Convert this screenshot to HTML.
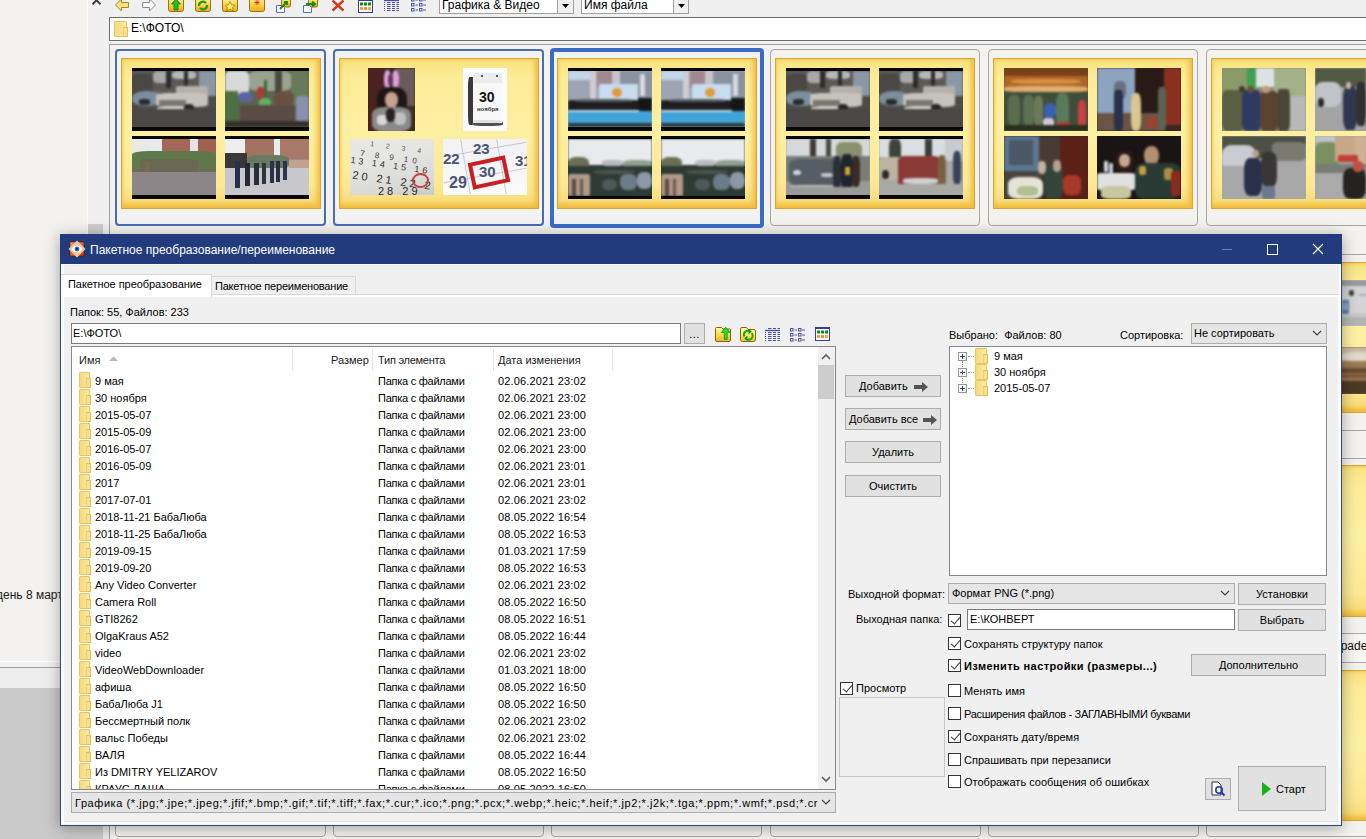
<!DOCTYPE html>
<html><head><meta charset="utf-8">
<style>
*{box-sizing:border-box;margin:0;padding:0}
html,body{width:1366px;height:839px;overflow:hidden}
body{position:relative;background:#f0f0f0;font-family:"Liberation Sans",sans-serif;font-size:11px;color:#000}
.a{position:absolute}
.t{position:absolute;white-space:nowrap;line-height:13px}
.card{position:absolute;border:1px solid #a6a6a6;border-radius:4px;background:#f3f2ee}
.card.sel1{border:2px solid #4a6cb4;border-radius:4px;background:#f1f2f2}
.card.sel2{border:4px solid #3a6cc6;border-radius:4px;background:#f1f2f2}
.frame{position:absolute;border:1px solid #d9a737;background:linear-gradient(180deg,#fae27e 0,#fcec98 12%,#fdf0a2 50%,#fce894 85%,#f8d870 100%);box-shadow:inset -5px -6px 5px -2px #f1bb3a,inset 3px 3px 3px -2px #f3c850}
.ph{position:absolute;overflow:hidden}
.lb:before,.lb:after{content:"";position:absolute;left:0;right:0;height:3px;background:#080808}
.lb:before{top:0}.lb:after{bottom:0}
.btn{position:absolute;background:#e1e1e1;border:1px solid #adadad;text-align:center;line-height:21px}
.cb{position:absolute;width:13px;height:13px;border:1px solid #333;background:#fff}
.cb.on:after{content:"";position:absolute;left:3.5px;top:0px;width:4px;height:8px;border:solid #333;border-width:0 1.6px 1.6px 0;transform:rotate(40deg)}
.fi{position:absolute;width:12px;height:16px;background:linear-gradient(90deg,#f8da7c,#fde89e);border:1px solid #e6c46c;border-radius:1px}.fi:after{content:"";position:absolute;right:-2px;bottom:-1px;width:3px;height:8px;background:#fbe08c;border:1px solid #e2be62;border-left-color:#f0d070}
</style></head><body>
<div class="a" style="left:0;top:0;width:88px;height:662px;background:#f3f2ee"></div><div class="t" style="left:-4px;top:589px;font-size:12px;color:#1a1a1a">день 8 март</div><div class="a" style="left:0;top:661px;width:88px;height:1px;background:#ffffff"></div><div class="a" style="left:0;top:667px;width:88px;height:1px;background:#a0a0a0"></div><div class="a" style="left:0;top:668px;width:88px;height:20px;background:#eeeeee"></div><div class="a" style="left:0;top:688px;width:109px;height:151px;background:#c9c9c9"></div><div class="a" style="left:103px;top:688px;width:6px;height:151px;background:#e6e6e6"></div><div class="a" style="left:87px;top:0;width:1px;height:688px;background:#fbfbfb"></div><div class="a" style="left:88px;top:0;width:21px;height:688px;background:#f0f0f0"></div><div class="a" style="left:88px;top:224px;width:15px;height:14px;background:#cdcdcd"></div><svg class="a" style="left:88px;top:0" width="16" height="6"><path d="M4.5 4.2L8.5 0.3L12.5 4.2" stroke="#3a3a3a" stroke-width="1.9" fill="none"/></svg><svg class="a" style="left:0;top:0" width="700" height="17" viewBox="0 0 700 17">
<defs>
<linearGradient id="gy" x1="0" y1="0" x2="0" y2="1"><stop offset="0" stop-color="#fff7b0"/><stop offset="0.5" stop-color="#fcd550"/><stop offset="1" stop-color="#f0a818"/></linearGradient>
</defs>
<path d="M115.5 5L121.5 -1V2.5H128.5V7.5H121.5V11Z" fill="#fbe27a" stroke="#a88a20" stroke-width="1"/>
<path d="M155.5 5L149.5 -1V2.5H142.5V7.5H149.5V11Z" fill="#fafafa" stroke="#8a8a8a" stroke-width="1"/>
<rect x="168.5" y="-3" width="15" height="14.5" rx="2" fill="url(#gy)" stroke="#a07010"/>
<path d="M174 10V4H171.5L176 -1L180.5 4H178V10Z" fill="#20c020" stroke="#107010" stroke-width="0.8"/>
<rect x="195.5" y="-3" width="15" height="14.5" rx="2" fill="url(#gy)" stroke="#a07010"/>
<path d="M199 6a4 4 0 0 1 7-3M207 5a4 4 0 0 1-7 3" stroke="#18a018" stroke-width="2.2" fill="none"/>
<rect x="222.5" y="-3" width="15" height="14.5" rx="2" fill="url(#gy)" stroke="#a07010"/>
<path d="M230 1.5L231.6 4.8L235 5.2L232.5 7.5L233.2 10.8L230 9.2L226.8 10.8L227.5 7.5L225 5.2L228.4 4.8Z" fill="#fff060" stroke="#a08010" stroke-width="0.8"/>
<rect x="249.5" y="-3" width="15" height="14.5" rx="2" fill="url(#gy)" stroke="#a07010"/>
<path d="M257 0V5M254.5 2.5H259.5M255 0.5L259 4.5M259 0.5L255 4.5" stroke="#e83020" stroke-width="0.9"/>
<rect x="281.5" y="-3" width="9" height="10" rx="1.5" fill="url(#gy)" stroke="#a07010"/>
<path d="M276.5 5.5H282.5L284.5 7.5V12.5H276.5Z" fill="#fff" stroke="#5a6ad0" stroke-width="1"/>
<path d="M280 9L287 2M284 2H287V5" stroke="#109010" stroke-width="1.8" fill="none"/>
<rect x="308.5" y="-3" width="9" height="10" rx="1.5" fill="url(#gy)" stroke="#a07010"/>
<path d="M303.5 5.5H309.5L311.5 7.5V12.5H303.5Z" fill="#fff" stroke="#5a6ad0" stroke-width="1"/>
<path d="M306 4H314M312 1.5L315 4L312 6.5" stroke="#109010" stroke-width="1.8" fill="none"/>
<path d="M332.5 0.5L343.5 10.5M343.5 0.5L332.5 10.5" stroke="#d83818" stroke-width="2.4"/>
<g transform="translate(-457,-328)">
<rect x="815.5" y="327.5" width="14" height="13" fill="#fff" stroke="#3c3c90" stroke-width="1"/>
<rect x="815" y="327" width="15" height="2" fill="#3c3c90"/>
<rect x="817" y="330.5" width="3" height="3" fill="#108a10"/><rect x="821" y="330.5" width="3" height="3" fill="#108a10"/><rect x="825" y="330.5" width="3" height="3" fill="#108a10"/>
<rect x="817" y="335" width="3" height="3" fill="#f0a050"/><rect x="821" y="335" width="3" height="3" fill="#f09040"/><rect x="825" y="335" width="3" height="3" fill="#e8a858"/>
</g>
<g transform="translate(-381,-330)" stroke="#4a4aa8" stroke-width="1.1">
<path d="M768 328.5H771.5M773 328.5H776M777.5 328.5H780"/>
<path d="M765 330.5H780" stroke-width="1.3"/>
<path d="M765 332.5H766M768 332.5H771.5M773 332.5H776M777.5 332.5H780"/>
<path d="M765 334.5H766M768 334.5H771.5M773 334.5H776M777.5 334.5H780"/>
<path d="M765 336.5H766M768 336.5H771.5M773 336.5H776M777.5 336.5H780"/>
<path d="M765 338.5H766M768 338.5H771.5M773 338.5H776M777.5 338.5H780"/>
<path d="M765 340.5H766M768 340.5H771.5M773 340.5H776M777.5 340.5H780"/>
</g>
<g transform="translate(-379,-330)" fill="none" stroke="#5050a8" stroke-width="1">
<rect x="790.5" y="328.5" width="2.5" height="2.5"/><rect x="798.5" y="328.5" width="2.5" height="2.5"/>
<rect x="790.5" y="333.5" width="2.5" height="2.5"/><rect x="798.5" y="333.5" width="2.5" height="2.5"/>
<rect x="790.5" y="338.5" width="2.5" height="2.5"/><rect x="798.5" y="338.5" width="2.5" height="2.5"/>
<path d="M794.5 330H797M802 330H805M794.5 335H797M802 335H805M794.5 340H797M802 340H805" stroke-width="1.2"/>
</g>
</svg><div class="a" style="left:439px;top:-2px;width:135px;height:16px;background:#fff;border:1px solid #a0a0a0"></div><div class="t" style="left:442px;top:-2px;font-size:12px;line-height:14px">Графика &amp; Видео</div><div class="a" style="left:557px;top:-2px;width:17px;height:16px;background:#f0f0f0;border:1px solid #a0a0a0"></div><svg class="a" style="left:561px;top:4px" width="9" height="5"><path d="M1 0H8L4.5 4Z" fill="#000"/></svg><div class="a" style="left:581px;top:-2px;width:108px;height:16px;background:#fff;border:1px solid #a0a0a0"></div><div class="t" style="left:584px;top:-2px;font-size:12px;line-height:14px">Имя файла</div><div class="a" style="left:673px;top:-2px;width:16px;height:16px;background:#f0f0f0;border:1px solid #a0a0a0"></div><svg class="a" style="left:677px;top:4px" width="9" height="5"><path d="M1 0H8L4.5 4Z" fill="#000"/></svg><div class="a" style="left:109px;top:17px;width:1257px;height:24px;background:#fff;border:1px solid #6e6e6e;border-right:0"></div><div class="fi" style="left:114px;top:21px;width:13px;height:16px"></div><div class="t" style="left:131px;top:22px;font-size:12px">E:\ФОТО\</div><div class="a" style="left:109px;top:44px;width:1257px;height:795px;background:#f3f2ee;border-top:1px solid #a0a0a0;border-left:1px solid #a0a0a0"></div><div class="card sel1" style="left:115px;top:49px;width:211px;height:177px"></div><div class="card sel1" style="left:333px;top:49px;width:211px;height:177px"></div><div class="card sel2" style="left:550px;top:48px;width:214px;height:180px"></div><div class="card " style="left:770px;top:49px;width:210px;height:177px"></div><div class="card " style="left:988px;top:49px;width:210px;height:177px"></div><div class="card " style="left:1206px;top:49px;width:220px;height:177px"></div><div class="frame" style="left:121px;top:58px;width:200px;height:151px"></div><div class="frame" style="left:339px;top:58px;width:200px;height:151px"></div><div class="frame" style="left:557px;top:58px;width:200px;height:151px"></div><div class="frame" style="left:775px;top:58px;width:200px;height:151px"></div><div class="frame" style="left:993px;top:58px;width:200px;height:151px"></div><div class="frame" style="left:1211px;top:58px;width:200px;height:151px"></div><div class="ph" style="left:132px;top:68px;width:84px;height:63px;background:#080808"><div class="a" style="left:0;top:3px;width:84px;height:56px;overflow:hidden;background:#4e4c48"><div class="a" style="left:-2px;top:-2px;width:88px;height:60px;filter:blur(1.0px)"><div class="a" style="left:2.0px;top:2.0px;width:84.0px;height:22.4px;background:#5c5a56;border-radius:0%"></div><div class="a" style="left:23.0px;top:2.0px;width:16.8px;height:12.3px;background:#a8a8aa;border-radius:30%"></div><div class="a" style="left:42.3px;top:2.0px;width:23.5px;height:8.4px;background:#b8b8ba;border-radius:30%"></div><div class="a" style="left:69.2px;top:2.0px;width:16.8px;height:25.2px;background:#8a98a6;border-radius:0%"></div><div class="a" style="left:35.6px;top:2.0px;width:5.0px;height:16.8px;background:#2e2c2a;border-radius:0%"></div><div class="a" style="left:54.1px;top:2.0px;width:4.2px;height:15.7px;background:#302e2c;border-radius:0%"></div><div class="a" style="left:2.0px;top:4.8px;width:21.0px;height:22.4px;background:#4a4844;border-radius:20%"></div><div class="a" style="left:2.0px;top:22.2px;width:30.2px;height:14.6px;background:#7a8e9c;border-radius:45%"></div><div class="a" style="left:8.7px;top:30.0px;width:11.8px;height:5.6px;background:#2a2a2a;border-radius:40%"></div><div class="a" style="left:45.7px;top:16.6px;width:31.9px;height:12.3px;background:#b4b0aa;border-radius:10%"></div><div class="a" style="left:25.5px;top:24.4px;width:52.1px;height:13.4px;background:#c6c2bc;border-radius:20%"></div><div class="a" style="left:28.9px;top:31.1px;width:26.9px;height:5.6px;background:#7a7670;border-radius:0%"></div><div class="a" style="left:27.2px;top:37.8px;width:31.9px;height:3.4px;background:#d8d4d0;border-radius:30%"></div><div class="a" style="left:54.1px;top:34.5px;width:10.1px;height:7.8px;background:#262624;border-radius:50%"></div><div class="a" style="left:2.0px;top:40.1px;width:84.0px;height:17.9px;background:#4a4846;border-radius:0%"></div></div></div></div><div class="ph" style="left:225px;top:68px;width:84px;height:63px;background:#080808"><div class="a" style="left:0;top:3px;width:84px;height:56px;overflow:hidden;background:#5e6450"><div class="a" style="left:-2px;top:-2px;width:88px;height:60px;filter:blur(1.0px)"><div class="a" style="left:2.0px;top:2.0px;width:23.5px;height:23.5px;background:#d8dada;border-radius:20%"></div><div class="a" style="left:25.5px;top:2.0px;width:42.0px;height:19.6px;background:#9aa290;border-radius:20%"></div><div class="a" style="left:67.5px;top:2.0px;width:18.5px;height:33.6px;background:#6a7a58;border-radius:0%"></div><div class="a" style="left:52.4px;top:2.0px;width:6.7px;height:28.0px;background:#4a4a40;border-radius:0%"></div><div class="a" style="left:2.0px;top:21.6px;width:13.4px;height:33.6px;background:#4e6e44;border-radius:0%"></div><div class="a" style="left:15.4px;top:23.3px;width:15.1px;height:10.1px;background:#5a64a0;border-radius:40%"></div><div class="a" style="left:33.9px;top:17.7px;width:6.7px;height:12.3px;background:#b03838;border-radius:30%"></div><div class="a" style="left:40.6px;top:11.0px;width:3.4px;height:15.7px;background:#3a6a3a;border-radius:0%"></div><div class="a" style="left:35.6px;top:28.9px;width:12.6px;height:10.1px;background:#62b062;border-radius:40%"></div><div class="a" style="left:50.7px;top:22.2px;width:20.2px;height:15.7px;background:#6a5040;border-radius:40%"></div><div class="a" style="left:72.6px;top:27.2px;width:13.4px;height:26.9px;background:#8a90b0;border-radius:20%"></div><div class="a" style="left:17.1px;top:35.6px;width:55.4px;height:18.5px;background:#5a4c44;border-radius:0%"></div><div class="a" style="left:2.0px;top:52.4px;width:84.0px;height:5.6px;background:#34302c;border-radius:0%"></div></div></div></div><div class="ph" style="left:132px;top:136px;width:84px;height:63px;background:#080808"><div class="a" style="left:0;top:3px;width:84px;height:56px;overflow:hidden;background:linear-gradient(180deg,#d8d8d8 0,#7a8a68 40%,#6a6a58 55%,#8c8688 75%,#8a8484 100%)"><div class="a" style="left:-2px;top:-2px;width:88px;height:60px;filter:blur(0.7px)"><div class="a" style="left:2.0px;top:2.0px;width:30.2px;height:15.7px;background:#e8eaea;border-radius:0%"></div><div class="a" style="left:32.2px;top:2.0px;width:27.7px;height:21.3px;background:#a4675a;border-radius:0%"></div><div class="a" style="left:60.0px;top:2.0px;width:8.4px;height:16.8px;background:#e4e6e6;border-radius:0%"></div><div class="a" style="left:68.4px;top:2.0px;width:17.6px;height:22.4px;background:#a06050;border-radius:0%"></div><div class="a" style="left:2.0px;top:14.3px;width:84.0px;height:17.9px;background:#5e7a4c;border-radius:20%"></div><div class="a" style="left:10.4px;top:21.6px;width:58.8px;height:14.0px;background:#6a6852;border-radius:20%"></div><div class="a" style="left:14.6px;top:24.4px;width:5.0px;height:28.0px;background:#7a6a50;border-radius:0%"></div><div class="a" style="left:2.0px;top:34.5px;width:84.0px;height:23.5px;background:#8c8688;border-radius:0%"></div></div></div></div><div class="ph" style="left:225px;top:136px;width:84px;height:63px;background:#080808"><div class="a" style="left:0;top:3px;width:84px;height:56px;overflow:hidden;background:linear-gradient(180deg,#dde0e2 0,#8a7a70 30%,#c4c4c6 55%,#cacacc 100%)"><div class="a" style="left:-2px;top:-2px;width:88px;height:60px;filter:blur(0.7px)"><div class="a" style="left:2.0px;top:2.0px;width:20.2px;height:16.8px;background:#eceef0;border-radius:0%"></div><div class="a" style="left:22.2px;top:2.0px;width:28.6px;height:19.6px;background:#a27262;border-radius:0%"></div><div class="a" style="left:50.7px;top:2.0px;width:6.7px;height:16.8px;background:#eaecee;border-radius:0%"></div><div class="a" style="left:57.4px;top:2.0px;width:28.6px;height:19.6px;background:#a87868;border-radius:0%"></div><div class="a" style="left:2.0px;top:16.0px;width:21.8px;height:19.6px;background:#383838;border-radius:0%"></div><div class="a" style="left:23.8px;top:17.7px;width:42.0px;height:14.0px;background:#6a7a60;border-radius:30%"></div><div class="a" style="left:65.8px;top:23.3px;width:20.2px;height:8.4px;background:#c0a290;border-radius:0%"></div><div class="a" style="left:2.0px;top:31.1px;width:84.0px;height:26.9px;background:#c8c8cc;border-radius:0%"></div><div class="a" style="left:12.1px;top:24.4px;width:5.0px;height:26.9px;background:#2a3048;border-radius:0%"></div><div class="a" style="left:22.2px;top:25.5px;width:5.0px;height:23.5px;background:#262a36;border-radius:0%"></div><div class="a" style="left:30.6px;top:25.5px;width:5.0px;height:22.4px;background:#2a2e3a;border-radius:0%"></div><div class="a" style="left:39.0px;top:25.5px;width:4.2px;height:21.3px;background:#2e3440;border-radius:0%"></div><div class="a" style="left:46.5px;top:24.4px;width:4.2px;height:21.3px;background:#2a3248;border-radius:0%"></div><div class="a" style="left:53.2px;top:24.4px;width:4.2px;height:20.2px;background:#2a2e40;border-radius:0%"></div><div class="a" style="left:60.0px;top:24.4px;width:4.2px;height:19.0px;background:#30344a;border-radius:0%"></div></div></div></div><div class="ph" style="left:368px;top:68px;width:47px;height:63px;background:#080808"><div class="a" style="left:0;top:0px;width:47px;height:63px;overflow:hidden;background:#3a2a28"><div class="a" style="left:-2px;top:-2px;width:51px;height:67px;filter:blur(1.0px)"><div class="a" style="left:2.0px;top:2.0px;width:16.4px;height:63.0px;background:#4a2220;border-radius:0%"></div><div class="a" style="left:30.2px;top:2.0px;width:18.8px;height:37.8px;background:#6a5a58;border-radius:0%"></div><div class="a" style="left:18.0px;top:3.9px;width:6.6px;height:18.9px;background:#e6a8e6;border-radius:50%"></div><div class="a" style="left:26.4px;top:3.9px;width:6.6px;height:18.9px;background:#e0a0e0;border-radius:50%"></div><div class="a" style="left:21.7px;top:8.3px;width:5.6px;height:11.3px;background:#5a3a50;border-radius:40%"></div><div class="a" style="left:10.5px;top:20.9px;width:30.1px;height:28.4px;background:#1e1616;border-radius:40%"></div><div class="a" style="left:18.9px;top:25.9px;width:13.2px;height:16.4px;background:#c8a090;border-radius:45%"></div><div class="a" style="left:5.8px;top:41.1px;width:39.5px;height:25.2px;background:#8a8a8a;border-radius:30%"></div><div class="a" style="left:11.4px;top:49.2px;width:9.4px;height:9.4px;background:#d8d8d8;border-radius:40%"></div><div class="a" style="left:27.9px;top:46.1px;width:11.8px;height:12.6px;background:#c0c0c0;border-radius:40%"></div><div class="a" style="left:19.9px;top:42.3px;width:9.4px;height:13.9px;background:#2a2020;border-radius:40%"></div></div></div></div><div class="ph" style="left:463px;top:68px;width:44px;height:63px;background:#080808"><div class="a" style="left:0;top:0px;width:44px;height:63px;overflow:hidden;background:#fbfbfb"><div class="a" style="left:-2px;top:-2px;width:48px;height:67px;filter:blur(0.6px)"><div class="a" style="left:7.3px;top:10.8px;width:7.9px;height:47.9px;background:#3a3a3a;border-radius:20%"></div><div class="a" style="left:10.8px;top:54.9px;width:30.8px;height:5.0px;background:#505050;border-radius:30%"></div><div class="a" style="left:11.7px;top:7.0px;width:29.0px;height:50.4px;background:#f8f8f8;border-radius:0%"></div><div class="a" style="left:12.6px;top:7.0px;width:28.2px;height:10.1px;background:#ececec;border-radius:0%"></div><div class="a" style="left:11.7px;top:53.7px;width:29.0px;height:3.8px;background:#e0e0e0;border-radius:30%"></div></div><div class="a" style="left:18px;top:7px;width:2px;height:2px;background:#222;border-radius:50%"></div><div class="a" style="left:33px;top:7px;width:2px;height:2px;background:#222;border-radius:50%"></div><div class="t" style="left:16px;top:22px;font-size:14px;line-height:14px;font-weight:bold;color:#111">30</div><div class="t" style="left:14px;top:38px;font-size:6px;line-height:7px;font-weight:bold;color:#333">ноября</div></div></div><div class="ph" style="left:350px;top:139px;width:84px;height:56px;background:#080808"><div class="a" style="left:0;top:0px;width:84px;height:56px;overflow:hidden;background:linear-gradient(165deg,#e8e8e6 0,#e4e4e2 40%,#d8d8d4 80%,#cacac6 100%)"><div class="a" style="left:-2px;top:-2px;width:88px;height:60px;filter:blur(0.3px)"></div><div class="t" style="left:20px;top:2px;font-size:7px;color:#555;letter-spacing:5px;transform:rotate(8deg)">1 2 3 4</div><div class="t" style="left:10px;top:12px;font-size:8px;color:#444;letter-spacing:4px;transform:rotate(8deg)">7 8 9 10</div><div class="t" style="left:0px;top:22px;font-size:9px;color:#333;letter-spacing:3px;transform:rotate(8deg)">13 14 15 16 17</div><div class="t" style="left:2px;top:36px;font-size:11px;color:#2a2a2a;letter-spacing:3px;transform:rotate(8deg)">20 21 22 23</div><div class="t" style="left:28px;top:46px;font-size:11px;color:#2a2a2a;letter-spacing:3px">28 29</div><div class="a" style="left:62px;top:34px;width:17px;height:15px;border:2px solid #c84040;border-radius:50%"></div></div></div><div class="ph" style="left:443px;top:139px;width:84px;height:56px;background:#080808"><div class="a" style="left:0;top:0px;width:84px;height:56px;overflow:hidden;background:linear-gradient(180deg,#f2f2f6 0,#fafafa 100%)"><div class="a" style="left:-2px;top:-2px;width:88px;height:60px;filter:blur(0.3px)"></div><div class="a" style="left:0;top:10px;width:84px;height:1px;background:#c8c8d0;transform:rotate(-10deg)"></div><div class="a" style="left:0;top:36px;width:84px;height:1px;background:#c8c8d0;transform:rotate(-10deg)"></div><div class="a" style="left:22px;top:0;width:1px;height:56px;background:#c8c8d0;transform:rotate(-10deg)"></div><div class="a" style="left:58px;top:0;width:1px;height:56px;background:#c8c8d0;transform:rotate(-10deg)"></div><div class="t" style="left:0px;top:12px;font-size:15px;line-height:15px;font-weight:bold;color:#4a5474">22</div><div class="t" style="left:30px;top:2px;font-size:15px;line-height:15px;font-weight:bold;color:#4a5474">23</div><div class="t" style="left:72px;top:14px;font-size:15px;line-height:15px;font-weight:bold;color:#4a5474">31</div><div class="t" style="left:6px;top:36px;font-size:16px;line-height:16px;font-weight:bold;color:#4a5474">29</div><div class="a" style="left:27px;top:20px;width:38px;height:27px;border:4px solid #c81e24;transform:rotate(-12deg)"></div><div class="t" style="left:36px;top:25px;font-size:15px;line-height:15px;font-weight:bold;color:#4a5474">30</div></div></div><div class="ph" style="left:568px;top:68px;width:84px;height:63px;background:#080808"><div class="a" style="left:0;top:3px;width:84px;height:56px;overflow:hidden;background:#a0a8b8"><div class="a" style="left:-2px;top:-2px;width:88px;height:60px;filter:blur(1.0px)"><div class="a" style="left:2.0px;top:2.0px;width:26.9px;height:11.2px;background:#c4d6ea;border-radius:0%"></div><div class="a" style="left:2.0px;top:11.0px;width:25.2px;height:23.5px;background:#9ea4b2;border-radius:5%"></div><div class="a" style="left:23.8px;top:2.0px;width:6.7px;height:31.4px;background:#d0ccd4;border-radius:0%"></div><div class="a" style="left:30.6px;top:2.0px;width:15.1px;height:16.8px;background:#a08890;border-radius:0%"></div><div class="a" style="left:45.7px;top:2.0px;width:8.4px;height:16.8px;background:#c8c4cc;border-radius:0%"></div><div class="a" style="left:54.1px;top:2.0px;width:31.9px;height:28.0px;background:#8a92a0;border-radius:0%"></div><div class="a" style="left:74.2px;top:4.8px;width:5.0px;height:22.4px;background:#d8d8e0;border-radius:0%"></div><div class="a" style="left:33.1px;top:15.4px;width:38.6px;height:16.8px;background:#c8dcf0;border-radius:4%"></div><div class="a" style="left:45.7px;top:18.8px;width:10.1px;height:9.0px;background:#e09a40;border-radius:50%"></div><div class="a" style="left:2.0px;top:31.1px;width:70.6px;height:11.2px;background:#1e1e20;border-radius:10%"></div><div class="a" style="left:8.7px;top:30.0px;width:58.8px;height:3.4px;background:#5a5a60;border-radius:30%"></div><div class="a" style="left:71.7px;top:28.9px;width:14.3px;height:16.8px;background:#161616;border-radius:0%"></div><div class="a" style="left:2.0px;top:42.3px;width:84.0px;height:12.3px;background:#40a4d8;border-radius:0%"></div><div class="a" style="left:2.0px;top:41.2px;width:70.6px;height:2.2px;background:#b8d8e8;border-radius:0%"></div><div class="a" style="left:2.0px;top:54.1px;width:84.0px;height:3.9px;background:#2a3a40;border-radius:0%"></div></div></div></div><div class="ph" style="left:661px;top:68px;width:84px;height:63px;background:#080808"><div class="a" style="left:0;top:3px;width:84px;height:56px;overflow:hidden;background:#a0a8b8"><div class="a" style="left:-2px;top:-2px;width:88px;height:60px;filter:blur(1.0px)"><div class="a" style="left:2.0px;top:2.0px;width:26.9px;height:11.2px;background:#c4d6ea;border-radius:0%"></div><div class="a" style="left:2.0px;top:11.0px;width:25.2px;height:23.5px;background:#9ea4b2;border-radius:5%"></div><div class="a" style="left:23.8px;top:2.0px;width:6.7px;height:31.4px;background:#d0ccd4;border-radius:0%"></div><div class="a" style="left:30.6px;top:2.0px;width:15.1px;height:16.8px;background:#a08890;border-radius:0%"></div><div class="a" style="left:45.7px;top:2.0px;width:8.4px;height:16.8px;background:#c8c4cc;border-radius:0%"></div><div class="a" style="left:54.1px;top:2.0px;width:31.9px;height:28.0px;background:#8a92a0;border-radius:0%"></div><div class="a" style="left:74.2px;top:4.8px;width:5.0px;height:22.4px;background:#d8d8e0;border-radius:0%"></div><div class="a" style="left:33.1px;top:15.4px;width:38.6px;height:16.8px;background:#c8dcf0;border-radius:4%"></div><div class="a" style="left:45.7px;top:18.8px;width:10.1px;height:9.0px;background:#e09a40;border-radius:50%"></div><div class="a" style="left:2.0px;top:31.1px;width:70.6px;height:11.2px;background:#1e1e20;border-radius:10%"></div><div class="a" style="left:8.7px;top:30.0px;width:58.8px;height:3.4px;background:#5a5a60;border-radius:30%"></div><div class="a" style="left:71.7px;top:28.9px;width:14.3px;height:16.8px;background:#161616;border-radius:0%"></div><div class="a" style="left:2.0px;top:42.3px;width:84.0px;height:12.3px;background:#40a4d8;border-radius:0%"></div><div class="a" style="left:2.0px;top:41.2px;width:70.6px;height:2.2px;background:#b8d8e8;border-radius:0%"></div><div class="a" style="left:2.0px;top:54.1px;width:84.0px;height:3.9px;background:#2a3a40;border-radius:0%"></div></div></div></div><div class="ph" style="left:568px;top:136px;width:84px;height:63px;background:#080808"><div class="a" style="left:0;top:3px;width:84px;height:57px;overflow:hidden;background:#2e3a34"><div class="a" style="left:-2px;top:-2px;width:88px;height:61px;filter:blur(1.0px)"><div class="a" style="left:2.0px;top:2.0px;width:84.0px;height:26.2px;background:#e8eaee;border-radius:0%"></div><div class="a" style="left:2.0px;top:20.2px;width:21.0px;height:12.5px;background:#6a7058;border-radius:40%"></div><div class="a" style="left:35.6px;top:22.5px;width:21.0px;height:6.8px;background:#b8bcc0;border-radius:30%"></div><div class="a" style="left:56.6px;top:22.5px;width:29.4px;height:8.0px;background:#90a090;border-radius:30%"></div><div class="a" style="left:2.0px;top:29.4px;width:84.0px;height:29.6px;background:#2e3a34;border-radius:0%"></div><div class="a" style="left:2.0px;top:37.3px;width:21.8px;height:21.7px;background:#b0988a;border-radius:10%"></div><div class="a" style="left:6.2px;top:41.9px;width:3.4px;height:17.1px;background:#5a4a40;border-radius:0%"></div><div class="a" style="left:13.8px;top:41.9px;width:3.4px;height:17.1px;background:#6a5a50;border-radius:0%"></div><div class="a" style="left:35.6px;top:41.9px;width:15.1px;height:11.4px;background:#4a5a58;border-radius:40%"></div><div class="a" style="left:54.1px;top:37.3px;width:16.8px;height:16.0px;background:#6a7c88;border-radius:40%"></div><div class="a" style="left:70.9px;top:35.1px;width:15.1px;height:17.1px;background:#8a98a8;border-radius:40%"></div><div class="a" style="left:27.2px;top:32.8px;width:42.0px;height:4.6px;background:#4a5450;border-radius:40%"></div></div></div></div><div class="ph" style="left:661px;top:136px;width:84px;height:63px;background:#080808"><div class="a" style="left:0;top:3px;width:84px;height:57px;overflow:hidden;background:#2e3a34"><div class="a" style="left:-2px;top:-2px;width:88px;height:61px;filter:blur(1.0px)"><div class="a" style="left:2.0px;top:2.0px;width:84.0px;height:26.2px;background:#e8eaee;border-radius:0%"></div><div class="a" style="left:2.0px;top:20.2px;width:21.0px;height:12.5px;background:#6a7058;border-radius:40%"></div><div class="a" style="left:35.6px;top:22.5px;width:21.0px;height:6.8px;background:#b8bcc0;border-radius:30%"></div><div class="a" style="left:56.6px;top:22.5px;width:29.4px;height:8.0px;background:#90a090;border-radius:30%"></div><div class="a" style="left:2.0px;top:29.4px;width:84.0px;height:29.6px;background:#2e3a34;border-radius:0%"></div><div class="a" style="left:2.0px;top:37.3px;width:21.8px;height:21.7px;background:#b0988a;border-radius:10%"></div><div class="a" style="left:6.2px;top:41.9px;width:3.4px;height:17.1px;background:#5a4a40;border-radius:0%"></div><div class="a" style="left:13.8px;top:41.9px;width:3.4px;height:17.1px;background:#6a5a50;border-radius:0%"></div><div class="a" style="left:35.6px;top:41.9px;width:15.1px;height:11.4px;background:#4a5a58;border-radius:40%"></div><div class="a" style="left:54.1px;top:37.3px;width:16.8px;height:16.0px;background:#6a7c88;border-radius:40%"></div><div class="a" style="left:70.9px;top:35.1px;width:15.1px;height:17.1px;background:#8a98a8;border-radius:40%"></div><div class="a" style="left:27.2px;top:32.8px;width:42.0px;height:4.6px;background:#4a5450;border-radius:40%"></div></div></div></div><div class="ph" style="left:786px;top:68px;width:84px;height:63px;background:#080808"><div class="a" style="left:0;top:3px;width:84px;height:56px;overflow:hidden;background:#4e4c48"><div class="a" style="left:-2px;top:-2px;width:88px;height:60px;filter:blur(1.0px)"><div class="a" style="left:2.0px;top:2.0px;width:84.0px;height:22.4px;background:#5c5a56;border-radius:0%"></div><div class="a" style="left:23.0px;top:2.0px;width:16.8px;height:12.3px;background:#a8a8aa;border-radius:30%"></div><div class="a" style="left:42.3px;top:2.0px;width:23.5px;height:8.4px;background:#b8b8ba;border-radius:30%"></div><div class="a" style="left:69.2px;top:2.0px;width:16.8px;height:25.2px;background:#8a98a6;border-radius:0%"></div><div class="a" style="left:35.6px;top:2.0px;width:5.0px;height:16.8px;background:#2e2c2a;border-radius:0%"></div><div class="a" style="left:54.1px;top:2.0px;width:4.2px;height:15.7px;background:#302e2c;border-radius:0%"></div><div class="a" style="left:2.0px;top:4.8px;width:21.0px;height:22.4px;background:#4a4844;border-radius:20%"></div><div class="a" style="left:2.0px;top:22.2px;width:30.2px;height:14.6px;background:#7a8e9c;border-radius:45%"></div><div class="a" style="left:8.7px;top:30.0px;width:11.8px;height:5.6px;background:#2a2a2a;border-radius:40%"></div><div class="a" style="left:45.7px;top:16.6px;width:31.9px;height:12.3px;background:#b4b0aa;border-radius:10%"></div><div class="a" style="left:25.5px;top:24.4px;width:52.1px;height:13.4px;background:#c6c2bc;border-radius:20%"></div><div class="a" style="left:28.9px;top:31.1px;width:26.9px;height:5.6px;background:#7a7670;border-radius:0%"></div><div class="a" style="left:27.2px;top:37.8px;width:31.9px;height:3.4px;background:#d8d4d0;border-radius:30%"></div><div class="a" style="left:54.1px;top:34.5px;width:10.1px;height:7.8px;background:#262624;border-radius:50%"></div><div class="a" style="left:2.0px;top:40.1px;width:84.0px;height:17.9px;background:#4a4846;border-radius:0%"></div></div></div></div><div class="ph" style="left:879px;top:68px;width:84px;height:63px;background:#080808"><div class="a" style="left:0;top:3px;width:84px;height:56px;overflow:hidden;background:#4e4c48"><div class="a" style="left:-2px;top:-2px;width:88px;height:60px;filter:blur(1.0px)"><div class="a" style="left:2.0px;top:2.0px;width:84.0px;height:22.4px;background:#5c5a56;border-radius:0%"></div><div class="a" style="left:23.0px;top:2.0px;width:16.8px;height:12.3px;background:#a8a8aa;border-radius:30%"></div><div class="a" style="left:42.3px;top:2.0px;width:23.5px;height:8.4px;background:#b8b8ba;border-radius:30%"></div><div class="a" style="left:69.2px;top:2.0px;width:16.8px;height:25.2px;background:#8a98a6;border-radius:0%"></div><div class="a" style="left:35.6px;top:2.0px;width:5.0px;height:16.8px;background:#2e2c2a;border-radius:0%"></div><div class="a" style="left:54.1px;top:2.0px;width:4.2px;height:15.7px;background:#302e2c;border-radius:0%"></div><div class="a" style="left:2.0px;top:4.8px;width:21.0px;height:22.4px;background:#4a4844;border-radius:20%"></div><div class="a" style="left:2.0px;top:22.2px;width:30.2px;height:14.6px;background:#7a8e9c;border-radius:45%"></div><div class="a" style="left:8.7px;top:30.0px;width:11.8px;height:5.6px;background:#2a2a2a;border-radius:40%"></div><div class="a" style="left:45.7px;top:16.6px;width:31.9px;height:12.3px;background:#b4b0aa;border-radius:10%"></div><div class="a" style="left:25.5px;top:24.4px;width:52.1px;height:13.4px;background:#c6c2bc;border-radius:20%"></div><div class="a" style="left:28.9px;top:31.1px;width:26.9px;height:5.6px;background:#7a7670;border-radius:0%"></div><div class="a" style="left:27.2px;top:37.8px;width:31.9px;height:3.4px;background:#d8d4d0;border-radius:30%"></div><div class="a" style="left:54.1px;top:34.5px;width:10.1px;height:7.8px;background:#262624;border-radius:50%"></div><div class="a" style="left:2.0px;top:40.1px;width:84.0px;height:17.9px;background:#4a4846;border-radius:0%"></div></div></div></div><div class="ph" style="left:786px;top:136px;width:84px;height:63px;background:#080808"><div class="a" style="left:0;top:3px;width:84px;height:56px;overflow:hidden;background:#9a9a98"><div class="a" style="left:-2px;top:-2px;width:88px;height:60px;filter:blur(1.0px)"><div class="a" style="left:2.0px;top:2.0px;width:84.0px;height:16.8px;background:#d6d9da;border-radius:0%"></div><div class="a" style="left:25.5px;top:2.0px;width:6.7px;height:22.4px;background:#3e3a34;border-radius:0%"></div><div class="a" style="left:42.3px;top:2.0px;width:5.0px;height:19.6px;background:#4a4a40;border-radius:0%"></div><div class="a" style="left:52.4px;top:4.8px;width:25.2px;height:16.8px;background:#8a9070;border-radius:30%"></div><div class="a" style="left:2.0px;top:18.8px;width:84.0px;height:25.2px;background:#7a7c78;border-radius:0%"></div><div class="a" style="left:4.5px;top:22.2px;width:50.4px;height:26.9px;background:#545e64;border-radius:20%"></div><div class="a" style="left:8.7px;top:32.8px;width:8.4px;height:5.6px;background:#d8d8d8;border-radius:50%"></div><div class="a" style="left:37.3px;top:35.6px;width:11.8px;height:4.5px;background:#c8c8c8;border-radius:40%"></div><div class="a" style="left:6.2px;top:47.9px;width:46.2px;height:3.4px;background:#c0c0c0;border-radius:30%"></div><div class="a" style="left:49.0px;top:18.8px;width:8.4px;height:34.7px;background:#2a2e38;border-radius:30%"></div><div class="a" style="left:57.4px;top:16.6px;width:11.8px;height:37.0px;background:#1e2430;border-radius:30%"></div><div class="a" style="left:67.5px;top:18.8px;width:8.4px;height:30.8px;background:#3a2a28;border-radius:30%"></div><div class="a" style="left:60.8px;top:30.0px;width:5.0px;height:7.8px;background:#d0a830;border-radius:0%"></div><div class="a" style="left:2.0px;top:50.2px;width:84.0px;height:7.8px;background:#9a9a98;border-radius:0%"></div></div></div></div><div class="ph" style="left:879px;top:136px;width:84px;height:63px;background:#080808"><div class="a" style="left:0;top:3px;width:84px;height:56px;overflow:hidden;background:#a8a8a6"><div class="a" style="left:-2px;top:-2px;width:88px;height:60px;filter:blur(1.0px)"><div class="a" style="left:2.0px;top:2.0px;width:84.0px;height:17.9px;background:#dadee2;border-radius:0%"></div><div class="a" style="left:12.1px;top:2.0px;width:11.8px;height:25.2px;background:#404438;border-radius:30%"></div><div class="a" style="left:48.2px;top:2.0px;width:6.7px;height:22.4px;background:#3a3e36;border-radius:0%"></div><div class="a" style="left:67.5px;top:2.0px;width:18.5px;height:22.4px;background:#c8ccd0;border-radius:0%"></div><div class="a" style="left:2.0px;top:19.9px;width:30.2px;height:23.5px;background:#bcb4a0;border-radius:20%"></div><div class="a" style="left:5.4px;top:32.8px;width:6.7px;height:9.0px;background:#2a2a2a;border-radius:50%"></div><div class="a" style="left:20.5px;top:18.8px;width:42.0px;height:30.8px;background:#8a3a36;border-radius:15%"></div><div class="a" style="left:25.5px;top:41.2px;width:35.3px;height:5.6px;background:#d0d0d0;border-radius:30%"></div><div class="a" style="left:60.8px;top:17.7px;width:8.4px;height:33.6px;background:#7a6040;border-radius:30%"></div><div class="a" style="left:75.9px;top:14.3px;width:8.4px;height:33.6px;background:#3a4258;border-radius:30%"></div><div class="a" style="left:2.0px;top:46.8px;width:84.0px;height:11.2px;background:#a8a8a6;border-radius:0%"></div></div></div></div><div class="ph" style="left:1004px;top:68px;width:84px;height:63px;background:#080808"><div class="a" style="left:0;top:0px;width:84px;height:63px;overflow:hidden;background:#4a5a42"><div class="a" style="left:-2px;top:-2px;width:88px;height:67px;filter:blur(1.2px)"><div class="a" style="left:2.0px;top:2.0px;width:84.0px;height:23.9px;background:#b06428;border-radius:0%"></div><div class="a" style="left:2.0px;top:2.0px;width:84.0px;height:7.6px;background:#7a4018;border-radius:0%"></div><div class="a" style="left:8.7px;top:13.3px;width:70.6px;height:5.0px;background:#d89040;border-radius:40%"></div><div class="a" style="left:2.0px;top:19.6px;width:84.0px;height:6.3px;background:#e0b070;border-radius:30%"></div><div class="a" style="left:2.0px;top:25.9px;width:84.0px;height:39.1px;background:#3e4e3a;border-radius:0%"></div><div class="a" style="left:6.2px;top:28.5px;width:11.8px;height:31.5px;background:#5a6e4e;border-radius:30%"></div><div class="a" style="left:20.5px;top:28.5px;width:11.8px;height:31.5px;background:#5a7050;border-radius:30%"></div><div class="a" style="left:32.2px;top:30.4px;width:8.4px;height:28.4px;background:#6a7a58;border-radius:30%"></div><div class="a" style="left:54.1px;top:27.2px;width:13.4px;height:37.8px;background:#5a7a58;border-radius:30%"></div><div class="a" style="left:42.3px;top:36.6px;width:11.8px;height:15.8px;background:#3a60b0;border-radius:40%"></div><div class="a" style="left:40.6px;top:52.4px;width:11.8px;height:12.6px;background:#d0c8d8;border-radius:30%"></div><div class="a" style="left:54.1px;top:55.5px;width:15.1px;height:9.4px;background:#c03030;border-radius:40%"></div><div class="a" style="left:75.9px;top:33.5px;width:8.4px;height:31.5px;background:#c84040;border-radius:30%"></div><div class="a" style="left:2.0px;top:58.7px;width:84.0px;height:6.3px;background:#2a3020;border-radius:0%"></div></div></div></div><div class="ph" style="left:1097px;top:68px;width:84px;height:63px;background:#080808"><div class="a" style="left:0;top:0px;width:84px;height:63px;overflow:hidden;background:#3a2620"><div class="a" style="left:-2px;top:-2px;width:88px;height:67px;filter:blur(1.2px)"><div class="a" style="left:2.0px;top:2.0px;width:37.8px;height:45.4px;background:#8ca4c0;border-radius:0%"></div><div class="a" style="left:18.8px;top:14.6px;width:12.6px;height:18.9px;background:#6a7080;border-radius:30%"></div><div class="a" style="left:39.8px;top:2.0px;width:29.4px;height:47.2px;background:#2a1a16;border-radius:0%"></div><div class="a" style="left:69.2px;top:2.0px;width:16.8px;height:56.7px;background:#8a3020;border-radius:0%"></div><div class="a" style="left:2.0px;top:47.4px;width:67.2px;height:17.6px;background:#6a5446;border-radius:0%"></div><div class="a" style="left:18.8px;top:24.1px;width:9.2px;height:41.0px;background:#28304a;border-radius:20%"></div><div class="a" style="left:35.6px;top:27.2px;width:10.9px;height:37.8px;background:#d8c890;border-radius:30%"></div><div class="a" style="left:62.5px;top:20.9px;width:8.4px;height:44.1px;background:#5a6454;border-radius:20%"></div><div class="a" style="left:52.4px;top:51.1px;width:10.1px;height:11.3px;background:#a04030;border-radius:30%"></div></div></div></div><div class="ph" style="left:1004px;top:136px;width:84px;height:63px;background:#080808"><div class="a" style="left:0;top:0px;width:84px;height:63px;overflow:hidden;background:#3a2a26"><div class="a" style="left:-2px;top:-2px;width:88px;height:67px;filter:blur(1.2px)"><div class="a" style="left:2.0px;top:2.0px;width:35.3px;height:34.6px;background:#5a7890;border-radius:0%"></div><div class="a" style="left:7.0px;top:5.8px;width:23.5px;height:25.2px;background:#4a5868;border-radius:0%"></div><div class="a" style="left:37.3px;top:2.0px;width:21.0px;height:41.0px;background:#4a3a34;border-radius:0%"></div><div class="a" style="left:58.3px;top:2.0px;width:27.7px;height:63.0px;background:#5a2018;border-radius:0%"></div><div class="a" style="left:2.0px;top:36.6px;width:37.8px;height:28.4px;background:#4a4440;border-radius:0%"></div><div class="a" style="left:6.2px;top:43.0px;width:35.3px;height:22.1px;background:#e4e4d4;border-radius:30%"></div><div class="a" style="left:14.6px;top:52.4px;width:21.0px;height:9.4px;background:#b0c090;border-radius:40%"></div><div class="a" style="left:42.3px;top:30.4px;width:18.5px;height:34.6px;background:#34443a;border-radius:30%"></div><div class="a" style="left:35.6px;top:27.2px;width:8.4px;height:12.6px;background:#c8b0a0;border-radius:40%"></div><div class="a" style="left:50.7px;top:25.9px;width:8.4px;height:12.6px;background:#b8a090;border-radius:40%"></div><div class="a" style="left:60.8px;top:41.1px;width:18.5px;height:20.2px;background:#a83828;border-radius:30%"></div></div></div></div><div class="ph" style="left:1097px;top:136px;width:84px;height:63px;background:#080808"><div class="a" style="left:0;top:0px;width:84px;height:63px;overflow:hidden;background:#1a1414"><div class="a" style="left:-2px;top:-2px;width:88px;height:67px;filter:blur(1.2px)"><div class="a" style="left:20.5px;top:15.9px;width:18.5px;height:23.9px;background:#2a1a18;border-radius:40%"></div><div class="a" style="left:23.8px;top:19.6px;width:10.9px;height:13.9px;background:#c8a890;border-radius:45%"></div><div class="a" style="left:49.0px;top:12.1px;width:15.1px;height:18.9px;background:#b09070;border-radius:45%"></div><div class="a" style="left:39.8px;top:28.5px;width:46.2px;height:36.5px;background:#2a3a34;border-radius:20%"></div><div class="a" style="left:44.0px;top:32.2px;width:6.7px;height:8.8px;background:#c0a040;border-radius:30%"></div><div class="a" style="left:69.2px;top:33.5px;width:8.4px;height:12.6px;background:#a89040;border-radius:30%"></div><div class="a" style="left:2.0px;top:38.5px;width:37.8px;height:17.6px;background:#e0e0e0;border-radius:10%"></div><div class="a" style="left:6.2px;top:52.4px;width:29.4px;height:12.6px;background:#c8c8a0;border-radius:30%"></div><div class="a" style="left:75.9px;top:36.6px;width:10.1px;height:25.2px;background:#8a2a20;border-radius:20%"></div><div class="a" style="left:8.7px;top:27.2px;width:4.2px;height:11.3px;background:#d0d8e0;border-radius:20%"></div><div class="a" style="left:13.8px;top:28.5px;width:4.2px;height:10.1px;background:#c0ccd8;border-radius:20%"></div></div></div></div><div class="ph" style="left:1222px;top:68px;width:84px;height:63px;background:#080808"><div class="a" style="left:0;top:0px;width:84px;height:63px;overflow:hidden;background:#8a9470"><div class="a" style="left:-2px;top:-2px;width:88px;height:67px;filter:blur(1.2px)"><div class="a" style="left:2.0px;top:2.0px;width:25.2px;height:28.4px;background:#8a9a68;border-radius:0%"></div><div class="a" style="left:27.2px;top:2.0px;width:8.4px;height:22.1px;background:#40a050;border-radius:0%"></div><div class="a" style="left:35.6px;top:2.0px;width:18.5px;height:18.9px;background:#dde3e5;border-radius:0%"></div><div class="a" style="left:54.1px;top:2.0px;width:31.9px;height:31.5px;background:#a4b08a;border-radius:0%"></div><div class="a" style="left:60.8px;top:30.4px;width:25.2px;height:34.6px;background:#b8b8b6;border-radius:0%"></div><div class="a" style="left:2.0px;top:24.1px;width:21.8px;height:41.0px;background:#5a5e42;border-radius:20%"></div><div class="a" style="left:18.8px;top:19.6px;width:6.7px;height:6.3px;background:#3a3a30;border-radius:50%"></div><div class="a" style="left:22.2px;top:24.1px;width:18.5px;height:41.0px;background:#2e3a64;border-radius:20%"></div><div class="a" style="left:27.2px;top:19.6px;width:6.7px;height:7.6px;background:#6a5040;border-radius:50%"></div><div class="a" style="left:39.8px;top:24.7px;width:18.5px;height:40.3px;background:#5a4232;border-radius:20%"></div><div class="a" style="left:42.3px;top:19.6px;width:7.6px;height:7.6px;background:#c09a80;border-radius:50%"></div><div class="a" style="left:56.6px;top:23.4px;width:13.4px;height:41.6px;background:#4a4636;border-radius:20%"></div></div></div></div><div class="ph" style="left:1315px;top:68px;width:51px;height:63px;background:#080808"><div class="a" style="left:0;top:0px;width:51px;height:63px;overflow:hidden;background:#a2a2a2"><div class="a" style="left:-2px;top:-2px;width:55px;height:67px;filter:blur(1.2px)"><div class="a" style="left:2.0px;top:2.0px;width:51.0px;height:18.9px;background:#525a44;border-radius:0%"></div><div class="a" style="left:2.0px;top:15.9px;width:25.5px;height:25.2px;background:#c0c4c8;border-radius:30%"></div><div class="a" style="left:4.5px;top:32.2px;width:6.1px;height:8.8px;background:#2a2a2a;border-radius:50%"></div><div class="a" style="left:2.0px;top:41.1px;width:51.0px;height:23.9px;background:#a4a4a4;border-radius:0%"></div><div class="a" style="left:30.1px;top:19.6px;width:14.3px;height:44.1px;background:#2e3850;border-radius:30%"></div><div class="a" style="left:32.6px;top:15.9px;width:5.1px;height:7.6px;background:#d0b8a8;border-radius:50%"></div><div class="a" style="left:42.8px;top:15.9px;width:10.2px;height:44.1px;background:#303030;border-radius:30%"></div></div></div></div><div class="ph" style="left:1222px;top:136px;width:84px;height:63px;background:#080808"><div class="a" style="left:0;top:0px;width:84px;height:63px;overflow:hidden;background:#a8a8a8"><div class="a" style="left:-2px;top:-2px;width:88px;height:67px;filter:blur(1.2px)"><div class="a" style="left:2.0px;top:2.0px;width:84.0px;height:22.1px;background:#4a5042;border-radius:0%"></div><div class="a" style="left:52.4px;top:8.3px;width:33.6px;height:18.9px;background:#7a7a70;border-radius:20%"></div><div class="a" style="left:2.0px;top:10.8px;width:33.6px;height:27.7px;background:#c8ccd0;border-radius:30%"></div><div class="a" style="left:2.0px;top:32.2px;width:84.0px;height:32.8px;background:#a8a8a8;border-radius:0%"></div><div class="a" style="left:23.8px;top:24.1px;width:18.5px;height:37.8px;background:#28304a;border-radius:30%"></div><div class="a" style="left:32.2px;top:15.9px;width:6.7px;height:7.6px;background:#c0a090;border-radius:50%"></div><div class="a" style="left:40.6px;top:18.4px;width:16.8px;height:34.6px;background:#383636;border-radius:30%"></div><div class="a" style="left:42.3px;top:52.4px;width:12.6px;height:12.6px;background:#6a7890;border-radius:20%"></div></div></div></div><div class="ph" style="left:1315px;top:136px;width:51px;height:63px;background:#080808"><div class="a" style="left:0;top:0px;width:51px;height:63px;overflow:hidden;background:#a8a8a8"><div class="a" style="left:-2px;top:-2px;width:55px;height:67px;filter:blur(1.2px)"><div class="a" style="left:2.0px;top:2.0px;width:51.0px;height:6.3px;background:#c0c4c8;border-radius:0%"></div><div class="a" style="left:2.0px;top:8.3px;width:22.9px;height:30.2px;background:#7a9060;border-radius:30%"></div><div class="a" style="left:22.4px;top:2.0px;width:30.6px;height:25.2px;background:#c8a888;border-radius:0%"></div><div class="a" style="left:41.8px;top:2.0px;width:11.2px;height:28.4px;background:#d0b090;border-radius:0%"></div><div class="a" style="left:24.9px;top:20.9px;width:20.4px;height:7.6px;background:#c04038;border-radius:10%"></div><div class="a" style="left:2.0px;top:30.4px;width:51.0px;height:9.4px;background:#7a7c78;border-radius:0%"></div><div class="a" style="left:2.0px;top:38.5px;width:51.0px;height:26.5px;background:#aaaaaa;border-radius:0%"></div><div class="a" style="left:30.1px;top:33.5px;width:22.9px;height:31.5px;background:#262220;border-radius:30%"></div><div class="a" style="left:40.2px;top:27.2px;width:10.2px;height:11.3px;background:#c05040;border-radius:40%"></div></div></div></div><div class="card" style="left:115px;top:254px;width:211px;height:177px"></div><div class="card" style="left:333px;top:254px;width:211px;height:177px"></div><div class="card" style="left:551px;top:254px;width:211px;height:177px"></div><div class="card" style="left:770px;top:254px;width:211px;height:177px"></div><div class="card" style="left:988px;top:254px;width:211px;height:177px"></div><div class="card" style="left:1206px;top:254px;width:211px;height:177px"></div><div class="frame" style="left:1211px;top:262px;width:200px;height:151px"></div><div class="card" style="left:115px;top:458px;width:211px;height:176px"></div><div class="card" style="left:333px;top:458px;width:211px;height:176px"></div><div class="card" style="left:551px;top:458px;width:211px;height:176px"></div><div class="card" style="left:770px;top:458px;width:211px;height:176px"></div><div class="card" style="left:988px;top:458px;width:211px;height:176px"></div><div class="card" style="left:1206px;top:458px;width:211px;height:176px"></div><div class="frame" style="left:1211px;top:465px;width:200px;height:152px"></div><div class="card" style="left:115px;top:662px;width:211px;height:175px"></div><div class="card" style="left:333px;top:662px;width:211px;height:175px"></div><div class="card" style="left:551px;top:662px;width:211px;height:175px"></div><div class="card" style="left:770px;top:662px;width:211px;height:175px"></div><div class="card" style="left:988px;top:662px;width:211px;height:175px"></div><div class="card" style="left:1206px;top:662px;width:211px;height:175px"></div><div class="frame" style="left:1211px;top:670px;width:200px;height:151px"></div><div class="ph" style="left:1315px;top:280px;width:84px;height:46px;background:#080808"><div class="a" style="left:0;top:0px;width:84px;height:46px;overflow:hidden;background:#c8c8ca"><div class="a" style="left:-2px;top:-2px;width:88px;height:50px;filter:blur(1.0px)"><div class="a" style="left:2.0px;top:2.0px;width:84.0px;height:5.5px;background:#9a9a9c;border-radius:0%"></div><div class="a" style="left:27.2px;top:7.5px;width:58.8px;height:27.6px;background:#d4d4d6;border-radius:0%"></div><div class="a" style="left:36.4px;top:12.1px;width:4.2px;height:5.5px;background:#404040;border-radius:50%"></div><div class="a" style="left:45.7px;top:15.8px;width:16.8px;height:2.3px;background:#b0b0b0;border-radius:0%"></div><div class="a" style="left:28.9px;top:21.8px;width:7.6px;height:13.8px;background:#5a7aa8;border-radius:10%"></div><div class="a" style="left:29.7px;top:25.0px;width:5.0px;height:6.9px;background:#8aa8c8;border-radius:0%"></div><div class="a" style="left:2.0px;top:38.8px;width:84.0px;height:9.2px;background:#b4b4b4;border-radius:0%"></div></div></div></div><div class="ph" style="left:1315px;top:347px;width:84px;height:47px;background:#080808"><div class="a" style="left:0;top:0px;width:84px;height:47px;overflow:hidden;background:#8a6a48"><div class="a" style="left:-2px;top:-2px;width:88px;height:51px;filter:blur(1.0px)"><div class="a" style="left:2.0px;top:2.0px;width:84.0px;height:14.1px;background:#c8b8a0;border-radius:0%"></div><div class="a" style="left:27.2px;top:6.7px;width:33.6px;height:9.4px;background:#e0d8c8;border-radius:40%"></div><div class="a" style="left:2.0px;top:16.1px;width:84.0px;height:18.8px;background:#9a7a54;border-radius:0%"></div><div class="a" style="left:27.2px;top:23.1px;width:42.0px;height:4.7px;background:#6a4a30;border-radius:0%"></div><div class="a" style="left:27.2px;top:29.3px;width:42.0px;height:3.8px;background:#7a5a3a;border-radius:0%"></div><div class="a" style="left:2.0px;top:35.8px;width:84.0px;height:13.2px;background:#4a3a24;border-radius:0%"></div></div></div></div><div class="a" style="left:1342px;top:634px;width:24px;height:28px;background:linear-gradient(90deg,#f2f1ee,#f7f7f5)"></div><div class="t" style="left:1332px;top:640px;font-size:12px;color:#111">Upade</div><div class="a" style="left:1342px;top:633px;width:24px;height:1px;background:#a8a8a8"></div><div class="a" style="left:1342px;top:662px;width:24px;height:1px;background:#a8a8a8"></div><div class="a" style="left:60px;top:234px;width:1282px;height:592px;box-shadow:0 2px 14px rgba(0,0,0,0.34);background:#f0f0f0;border:1px solid #2d4a86;border-top:0"></div><div class="a" style="left:60px;top:234px;width:1282px;height:30px;background:#213b7d"></div><svg class="a" style="left:64px;top:237px" width="26" height="24" viewBox="64 237 26 24"><defs><linearGradient id="ti" x1="0" y1="0" x2="1" y2="1"><stop offset="0" stop-color="#f4a070"/><stop offset="1" stop-color="#c82818"/></linearGradient></defs><rect x="70" y="242" width="14" height="14" fill="url(#ti)" stroke="#5a1a10" stroke-width="0.6"/><path d="M77 240.5L85.5 249L77 257.5L68.5 249Z" fill="#f6c898"/><ellipse cx="77" cy="249" rx="5.2" ry="3.2" fill="#fff"/><circle cx="77" cy="249" r="2.4" fill="#2a6ad0"/><circle cx="77" cy="249" r="1.1" fill="#081a50"/></svg><div class="t" style="left:90px;top:243px;font-size:12px;color:#fff;line-height:14px">Пакетное преобразование/переименование</div><div class="a" style="left:1222px;top:249px;width:10px;height:1px;background:#6c7fa8"></div><div class="a" style="left:1267px;top:244px;width:11px;height:11px;border:1px solid #fff"></div><svg class="a" style="left:1312px;top:243px" width="12" height="12" viewBox="0 0 12 12"><path d="M1 1L11 11M11 1L1 11" stroke="#fff" stroke-width="1.2"/></svg><div class="a" style="left:61px;top:264px;width:1280px;height:560px;border-left:3px solid #fafafa;border-right:2px solid #fff;border-bottom:3px solid #fff"></div><div class="a" style="left:211px;top:294px;width:1128px;height:1px;background:#d9d9d9"></div><div class="a" style="left:61px;top:264px;width:1280px;height:1px;background:#f6f7fb"></div><div class="a" style="left:64px;top:295px;width:1275px;height:527px;background:#f0f0f0;border-top:2px solid #ffffff;border-right:1px solid #fafafa;border-bottom:1px solid #e4e4e4"></div><div class="a" style="left:211px;top:276px;width:145px;height:19px;background:#f0f0f0;border:1px solid #d9d9d9"></div><div class="a" style="left:61px;top:274px;width:151px;height:23px;background:#ffffff;border:1px solid #d9d9d9;border-bottom:0;border-left:0"></div><div class="t" style="left:68px;top:278px;letter-spacing:-0.05px">Пакетное преобразование</div><div class="t" style="left:215px;top:280px;letter-spacing:-0.2px">Пакетное переименование</div><div class="t" style="left:70px;top:306px;">Папок: 55, Файлов: 233</div><div class="a" style="left:71px;top:323px;width:610px;height:21px;background:#fff;border:1px solid #7a7a7a"></div><div class="t" style="left:73px;top:327px;">E:\ФОТО\</div><div class="btn" style="left:684px;top:323px;width:21px;height:21px;line-height:21px;font-size:11px;letter-spacing:0.5px">...</div><svg class="a" style="left:710px;top:322px" width="126" height="24" viewBox="710 322 126 24">
<defs>
<linearGradient id="fy2" x1="0" y1="0" x2="0" y2="1"><stop offset="0" stop-color="#fffbb8"/><stop offset="0.55" stop-color="#fcd84a"/><stop offset="1" stop-color="#f6b020"/></linearGradient>
<linearGradient id="fy3" x1="0" y1="0" x2="0" y2="1"><stop offset="0" stop-color="#fffcc0"/><stop offset="0.5" stop-color="#fbe870"/><stop offset="1" stop-color="#f2c030"/></linearGradient>
</defs>
<path d="M715.5 328.5Q715.5 327.5 716.5 327.5H721.5L723 329H729.5Q730.5 329 730.5 330V340Q730.5 341.5 729 341.5H717Q715.5 341.5 715.5 340Z" fill="url(#fy2)" stroke="#8a6012" stroke-width="1"/>
<path d="M724.2 339.5V332.5H721.2L725.7 327.2L730.2 332.5H727.2V339.5Z" fill="#22dd22" stroke="#0a8a0a" stroke-width="0.7"/>
<path d="M740.5 329Q740.5 327.5 742 327.5H746.5L748 329.5H754Q755.5 329.5 755.5 331V339.5Q755.5 341.5 753.5 341.5H742.5Q740.5 341.5 740.5 339.5Z" fill="url(#fy3)" stroke="#8a6012" stroke-width="1"/>
<path d="M744.5 336.5A3.8 3.8 0 0 1 750 331.5M751.5 333A3.8 3.8 0 0 1 746 338.5" stroke="#10b010" stroke-width="2" fill="none"/>
<path d="M748.5 330L750.8 331.5L748.5 333.5M747.5 336.5L745.2 338.5L747.5 340" stroke="#0a800a" stroke-width="1.2" fill="none"/>
<g stroke="#4a4aa8" stroke-width="1.1">
<path d="M768 328.5H771.5M773 328.5H776M777.5 328.5H780"/>
<path d="M765 330.5H780" stroke-width="1.3"/>
<path d="M765 332.5H766M768 332.5H771.5M773 332.5H776M777.5 332.5H780"/>
<path d="M765 334.5H766M768 334.5H771.5M773 334.5H776M777.5 334.5H780"/>
<path d="M765 336.5H766M768 336.5H771.5M773 336.5H776M777.5 336.5H780"/>
<path d="M765 338.5H766M768 338.5H771.5M773 338.5H776M777.5 338.5H780"/>
<path d="M765 340.5H766M768 340.5H771.5M773 340.5H776M777.5 340.5H780"/>
</g>
<g fill="none" stroke="#5050a8" stroke-width="1">
<rect x="790.5" y="328.5" width="2.5" height="2.5"/><rect x="798.5" y="328.5" width="2.5" height="2.5"/>
<rect x="790.5" y="333.5" width="2.5" height="2.5"/><rect x="798.5" y="333.5" width="2.5" height="2.5"/>
<rect x="790.5" y="338.5" width="2.5" height="2.5"/><rect x="798.5" y="338.5" width="2.5" height="2.5"/>
<path d="M794.5 330H797M802 330H805M794.5 335H797M802 335H805M794.5 340H797M802 340H805" stroke-width="1.2"/>
</g>
<rect x="815.5" y="327.5" width="14" height="13" fill="#fff" stroke="#3c3c90" stroke-width="1"/>
<rect x="815" y="327" width="15" height="2" fill="#3c3c90"/>
<rect x="817" y="330.5" width="3" height="3" fill="#108a10"/><rect x="821" y="330.5" width="3" height="3" fill="#108a10"/><rect x="825" y="330.5" width="3" height="3" fill="#108a10"/>
<rect x="817" y="335" width="3" height="3" fill="#f0a050"/><rect x="821" y="335" width="3" height="3" fill="#f09040"/><rect x="825" y="335" width="3" height="3" fill="#e8a858"/>
</svg><div class="a" style="left:71px;top:346px;width:765px;height:444px;background:#fff;border:1px solid #828790"></div><div class="a" style="left:292px;top:349px;width:1px;height:22px;background:#e5e5e5"></div><div class="a" style="left:372px;top:349px;width:1px;height:22px;background:#e5e5e5"></div><div class="a" style="left:493px;top:349px;width:1px;height:22px;background:#e5e5e5"></div><div class="a" style="left:612px;top:349px;width:1px;height:22px;background:#e5e5e5"></div><div class="t" style="left:79px;top:354px;color:#1a1a1a">Имя</div><svg class="a" style="left:109px;top:356px" width="9" height="6" viewBox="0 0 9 6"><path d="M0 5L4.5 0.5L9 5Z" fill="#b8b8b8"/></svg><div class="t" style="left:331px;top:354px;color:#1a1a1a">Размер</div><div class="t" style="left:378px;top:354px;color:#1a1a1a;letter-spacing:-0.25px">Тип элемента</div><div class="t" style="left:498px;top:354px;color:#1a1a1a">Дата изменения</div><div class="a" style="left:72px;top:372px;width:746px;height:417px;overflow:hidden"><div class="fi" style="left:7px;top:0px;width:11px;height:16px"></div><div class="t" style="left:23px;top:3px">9 мая</div><div class="t" style="left:306px;top:3px;letter-spacing:-0.25px">Папка с файлами</div><div class="t" style="left:426px;top:3px;letter-spacing:0.15px">02.06.2021 23:02</div><div class="fi" style="left:7px;top:17px;width:11px;height:16px"></div><div class="t" style="left:23px;top:20px">30 ноября</div><div class="t" style="left:306px;top:20px;letter-spacing:-0.25px">Папка с файлами</div><div class="t" style="left:426px;top:20px;letter-spacing:0.15px">02.06.2021 23:02</div><div class="fi" style="left:7px;top:34px;width:11px;height:16px"></div><div class="t" style="left:23px;top:37px">2015-05-07</div><div class="t" style="left:306px;top:37px;letter-spacing:-0.25px">Папка с файлами</div><div class="t" style="left:426px;top:37px;letter-spacing:0.15px">02.06.2021 23:00</div><div class="fi" style="left:7px;top:51px;width:11px;height:16px"></div><div class="t" style="left:23px;top:54px">2015-05-09</div><div class="t" style="left:306px;top:54px;letter-spacing:-0.25px">Папка с файлами</div><div class="t" style="left:426px;top:54px;letter-spacing:0.15px">02.06.2021 23:00</div><div class="fi" style="left:7px;top:68px;width:11px;height:16px"></div><div class="t" style="left:23px;top:71px">2016-05-07</div><div class="t" style="left:306px;top:71px;letter-spacing:-0.25px">Папка с файлами</div><div class="t" style="left:426px;top:71px;letter-spacing:0.15px">02.06.2021 23:00</div><div class="fi" style="left:7px;top:85px;width:11px;height:16px"></div><div class="t" style="left:23px;top:88px">2016-05-09</div><div class="t" style="left:306px;top:88px;letter-spacing:-0.25px">Папка с файлами</div><div class="t" style="left:426px;top:88px;letter-spacing:0.15px">02.06.2021 23:01</div><div class="fi" style="left:7px;top:102px;width:11px;height:16px"></div><div class="t" style="left:23px;top:105px">2017</div><div class="t" style="left:306px;top:105px;letter-spacing:-0.25px">Папка с файлами</div><div class="t" style="left:426px;top:105px;letter-spacing:0.15px">02.06.2021 23:01</div><div class="fi" style="left:7px;top:119px;width:11px;height:16px"></div><div class="t" style="left:23px;top:122px">2017-07-01</div><div class="t" style="left:306px;top:122px;letter-spacing:-0.25px">Папка с файлами</div><div class="t" style="left:426px;top:122px;letter-spacing:0.15px">02.06.2021 23:02</div><div class="fi" style="left:7px;top:136px;width:11px;height:16px"></div><div class="t" style="left:23px;top:139px">2018-11-21 БабаЛюба</div><div class="t" style="left:306px;top:139px;letter-spacing:-0.25px">Папка с файлами</div><div class="t" style="left:426px;top:139px;letter-spacing:0.15px">08.05.2022 16:54</div><div class="fi" style="left:7px;top:153px;width:11px;height:16px"></div><div class="t" style="left:23px;top:156px">2018-11-25 БабаЛюба</div><div class="t" style="left:306px;top:156px;letter-spacing:-0.25px">Папка с файлами</div><div class="t" style="left:426px;top:156px;letter-spacing:0.15px">08.05.2022 16:53</div><div class="fi" style="left:7px;top:170px;width:11px;height:16px"></div><div class="t" style="left:23px;top:173px">2019-09-15</div><div class="t" style="left:306px;top:173px;letter-spacing:-0.25px">Папка с файлами</div><div class="t" style="left:426px;top:173px;letter-spacing:0.15px">01.03.2021 17:59</div><div class="fi" style="left:7px;top:187px;width:11px;height:16px"></div><div class="t" style="left:23px;top:190px">2019-09-20</div><div class="t" style="left:306px;top:190px;letter-spacing:-0.25px">Папка с файлами</div><div class="t" style="left:426px;top:190px;letter-spacing:0.15px">08.05.2022 16:53</div><div class="fi" style="left:7px;top:204px;width:11px;height:16px"></div><div class="t" style="left:23px;top:207px">Any Video Converter</div><div class="t" style="left:306px;top:207px;letter-spacing:-0.25px">Папка с файлами</div><div class="t" style="left:426px;top:207px;letter-spacing:0.15px">02.06.2021 23:02</div><div class="fi" style="left:7px;top:221px;width:11px;height:16px"></div><div class="t" style="left:23px;top:224px">Camera Roll</div><div class="t" style="left:306px;top:224px;letter-spacing:-0.25px">Папка с файлами</div><div class="t" style="left:426px;top:224px;letter-spacing:0.15px">08.05.2022 16:50</div><div class="fi" style="left:7px;top:238px;width:11px;height:16px"></div><div class="t" style="left:23px;top:241px">GTI8262</div><div class="t" style="left:306px;top:241px;letter-spacing:-0.25px">Папка с файлами</div><div class="t" style="left:426px;top:241px;letter-spacing:0.15px">08.05.2022 16:51</div><div class="fi" style="left:7px;top:255px;width:11px;height:16px"></div><div class="t" style="left:23px;top:258px">OlgaKraus A52</div><div class="t" style="left:306px;top:258px;letter-spacing:-0.25px">Папка с файлами</div><div class="t" style="left:426px;top:258px;letter-spacing:0.15px">08.05.2022 16:44</div><div class="fi" style="left:7px;top:272px;width:11px;height:16px"></div><div class="t" style="left:23px;top:275px">video</div><div class="t" style="left:306px;top:275px;letter-spacing:-0.25px">Папка с файлами</div><div class="t" style="left:426px;top:275px;letter-spacing:0.15px">02.06.2021 23:02</div><div class="fi" style="left:7px;top:289px;width:11px;height:16px"></div><div class="t" style="left:23px;top:292px">VideoWebDownloader</div><div class="t" style="left:306px;top:292px;letter-spacing:-0.25px">Папка с файлами</div><div class="t" style="left:426px;top:292px;letter-spacing:0.15px">01.03.2021 18:00</div><div class="fi" style="left:7px;top:306px;width:11px;height:16px"></div><div class="t" style="left:23px;top:309px">афиша</div><div class="t" style="left:306px;top:309px;letter-spacing:-0.25px">Папка с файлами</div><div class="t" style="left:426px;top:309px;letter-spacing:0.15px">08.05.2022 16:50</div><div class="fi" style="left:7px;top:323px;width:11px;height:16px"></div><div class="t" style="left:23px;top:326px">БабаЛюба J1</div><div class="t" style="left:306px;top:326px;letter-spacing:-0.25px">Папка с файлами</div><div class="t" style="left:426px;top:326px;letter-spacing:0.15px">08.05.2022 16:50</div><div class="fi" style="left:7px;top:340px;width:11px;height:16px"></div><div class="t" style="left:23px;top:343px">Бессмертный полк</div><div class="t" style="left:306px;top:343px;letter-spacing:-0.25px">Папка с файлами</div><div class="t" style="left:426px;top:343px;letter-spacing:0.15px">02.06.2021 23:02</div><div class="fi" style="left:7px;top:357px;width:11px;height:16px"></div><div class="t" style="left:23px;top:360px">вальс Победы</div><div class="t" style="left:306px;top:360px;letter-spacing:-0.25px">Папка с файлами</div><div class="t" style="left:426px;top:360px;letter-spacing:0.15px">02.06.2021 23:02</div><div class="fi" style="left:7px;top:374px;width:11px;height:16px"></div><div class="t" style="left:23px;top:377px">ВАЛЯ</div><div class="t" style="left:306px;top:377px;letter-spacing:-0.25px">Папка с файлами</div><div class="t" style="left:426px;top:377px;letter-spacing:0.15px">08.05.2022 16:44</div><div class="fi" style="left:7px;top:391px;width:11px;height:16px"></div><div class="t" style="left:23px;top:394px">Из DMITRY YELIZAROV</div><div class="t" style="left:306px;top:394px;letter-spacing:-0.25px">Папка с файлами</div><div class="t" style="left:426px;top:394px;letter-spacing:0.15px">08.05.2022 16:50</div><div class="fi" style="left:7px;top:408px;width:11px;height:16px"></div><div class="t" style="left:23px;top:411px">КРАУС ДАША</div><div class="t" style="left:306px;top:411px;letter-spacing:-0.25px">Папка с файлами</div><div class="t" style="left:426px;top:411px;letter-spacing:0.15px">08.05.2022 16:50</div></div><div class="a" style="left:818px;top:347px;width:17px;height:442px;background:#f0f0f0"></div><svg class="a" style="left:821px;top:353px" width="10" height="7" viewBox="0 0 10 7"><path d="M1 6L5 2L9 6" stroke="#606060" stroke-width="1.6" fill="none"/></svg><div class="a" style="left:818px;top:365px;width:16px;height:34px;background:#cdcdcd"></div><svg class="a" style="left:821px;top:776px" width="10" height="7" viewBox="0 0 10 7"><path d="M1 1L5 5L9 1" stroke="#606060" stroke-width="1.6" fill="none"/></svg><div class="a" style="left:71px;top:792px;width:765px;height:21px;background:#e5e5e5;border:1px solid #adadad"></div><div class="t" style="left:75px;top:797px;letter-spacing:0.57px;width:745px;overflow:hidden">Графика (*.jpg;*.jpe;*.jpeg;*.jfif;*.bmp;*.gif;*.tif;*.tiff;*.fax;*.cur;*.ico;*.png;*.pcx;*.webp;*.heic;*.heif;*.jp2;*.j2k;*.tga;*.ppm;*.wmf;*.psd;*.cr</div><svg class="a" style="left:821px;top:799px" width="10" height="7" viewBox="0 0 10 7"><path d="M1 1L5 5L9 1" stroke="#404040" stroke-width="1.1" fill="none"/></svg><div class="btn" style="left:845px;top:375px;width:96px;height:22px;text-align:left"><span class="a" style="left:13px;top:0px;line-height:21px">Добавить</span><svg class="a" style="left:68px;top:6px" width="14" height="10" viewBox="0 0 14 10"><path d="M0 3h8V0l6 5l-6 5V7H0z" fill="#555"/></svg></div><div class="btn" style="left:845px;top:408px;width:96px;height:22px;text-align:left"><span class="a" style="left:3px;top:0px;line-height:21px">Добавить все</span><svg class="a" style="left:77px;top:6px" width="14" height="10" viewBox="0 0 14 10"><path d="M0 3h8V0l6 5l-6 5V7H0z" fill="#555"/></svg></div><div class="btn" style="left:845px;top:441px;width:96px;height:22px">Удалить</div><div class="btn" style="left:845px;top:475px;width:96px;height:22px">Очистить</div><div class="t" style="left:949px;top:329px;">Выбрано:&nbsp; Файлов: 80</div><div class="t" style="left:1120px;top:329px;">Сортировка:</div><div class="a" style="left:1191px;top:323px;width:136px;height:21px;background:#e5e5e5;border:1px solid #adadad"></div><div class="t" style="left:1194px;top:327px;">Не сортировать</div><svg class="a" style="left:1312px;top:330px" width="10" height="7" viewBox="0 0 10 7"><path d="M1 1L5 5L9 1" stroke="#404040" stroke-width="1.1" fill="none"/></svg><div class="a" style="left:949px;top:346px;width:378px;height:230px;background:#fff;border:1px solid #828790"></div><div class="a" style="left:958px;top:352px;width:9px;height:9px;border:1px solid #8a9ab0;background:#fff"></div><div class="a" style="left:960px;top:356px;width:5px;height:1px;background:#2a3a6a"></div><div class="a" style="left:962px;top:354px;width:1px;height:5px;background:#2a3a6a"></div><div class="a" style="left:968px;top:356px;width:6px;height:1px;border-top:1px dotted #909090"></div><div class="fi" style="left:975px;top:348px;width:12px;height:16px"></div><div class="t" style="left:994px;top:350px;">9 мая</div><div class="a" style="left:958px;top:368px;width:9px;height:9px;border:1px solid #8a9ab0;background:#fff"></div><div class="a" style="left:960px;top:372px;width:5px;height:1px;background:#2a3a6a"></div><div class="a" style="left:962px;top:370px;width:1px;height:5px;background:#2a3a6a"></div><div class="a" style="left:968px;top:372px;width:6px;height:1px;border-top:1px dotted #909090"></div><div class="fi" style="left:975px;top:364px;width:12px;height:16px"></div><div class="t" style="left:994px;top:366px;">30 ноября</div><div class="a" style="left:958px;top:384px;width:9px;height:9px;border:1px solid #8a9ab0;background:#fff"></div><div class="a" style="left:960px;top:388px;width:5px;height:1px;background:#2a3a6a"></div><div class="a" style="left:962px;top:386px;width:1px;height:5px;background:#2a3a6a"></div><div class="a" style="left:968px;top:388px;width:6px;height:1px;border-top:1px dotted #909090"></div><div class="fi" style="left:975px;top:380px;width:12px;height:16px"></div><div class="t" style="left:994px;top:382px;">2015-05-07</div><div class="a" style="left:962px;top:361px;width:1px;height:22px;border-left:1px dotted #909090"></div><div class="t" style="left:848px;top:588px;">Выходной формат:</div><div class="a" style="left:948px;top:583px;width:287px;height:21px;background:#e5e5e5;border:1px solid #adadad"></div><div class="t" style="left:952px;top:587px;">Формат PNG (*.png)</div><svg class="a" style="left:1220px;top:590px" width="10" height="7" viewBox="0 0 10 7"><path d="M1 1L5 5L9 1" stroke="#404040" stroke-width="1.1" fill="none"/></svg><div class="btn" style="left:1238px;top:583px;width:88px;height:22px">Установки</div><div class="t" style="left:856px;top:613px;">Выходная папка:</div><div class="cb on" style="left:948px;top:614px"></div><div class="a" style="left:967px;top:609px;width:268px;height:21px;background:#fff;border:1px solid #7a7a7a"></div><div class="t" style="left:970px;top:613px;">E:\КОНВЕРТ</div><div class="btn" style="left:1238px;top:609px;width:88px;height:22px">Выбрать</div><div class="cb on" style="left:948px;top:637px"></div><div class="t" style="left:964px;top:638px;">Сохранять структуру папок</div><div class="cb on" style="left:948px;top:659px"></div><div class="t" style="left:964px;top:660px;font-weight:bold;letter-spacing:0.4px">Изменить настройки (размеры...)</div><div class="cb" style="left:948px;top:684px"></div><div class="t" style="left:964px;top:685px;">Менять имя</div><div class="cb" style="left:948px;top:707px"></div><div class="t" style="left:964px;top:708px;letter-spacing:-0.3px">Расширения файлов - ЗАГЛАВНЫМИ буквами</div><div class="cb on" style="left:948px;top:730px"></div><div class="t" style="left:964px;top:731px;">Сохранять дату/время</div><div class="cb" style="left:948px;top:753px"></div><div class="t" style="left:964px;top:754px;">Спрашивать при перезаписи</div><div class="cb" style="left:948px;top:775px"></div><div class="t" style="left:964px;top:776px;">Отображать сообщения об ошибках</div><div class="btn" style="left:1191px;top:654px;width:135px;height:22px">Дополнительно</div><div class="cb on" style="left:840px;top:682px"></div><div class="t" style="left:856px;top:682px;">Просмотр</div><div class="a" style="left:839px;top:697px;width:106px;height:80px;border:1px solid #c8c8c8"></div><div class="btn" style="left:1205px;top:778px;width:26px;height:22px"></div><svg class="a" style="left:1210px;top:781px" width="17" height="16" viewBox="0 0 17 16"><path d="M2 1h6l3 3v10H2z" fill="#fff" stroke="#333" stroke-width="1"/><circle cx="9" cy="9" r="3.2" fill="none" stroke="#1a3aaa" stroke-width="1.6"/><path d="M11 11l3.5 3.5" stroke="#1a3aaa" stroke-width="2"/></svg><div class="btn" style="left:1238px;top:766px;width:88px;height:45px"></div><svg class="a" style="left:1262px;top:782px" width="9" height="14" viewBox="0 0 9 14"><path d="M0 0L9 7L0 14Z" fill="#18b018"/></svg><div class="t" style="left:1276px;top:783px;">Старт</div></body></html>
